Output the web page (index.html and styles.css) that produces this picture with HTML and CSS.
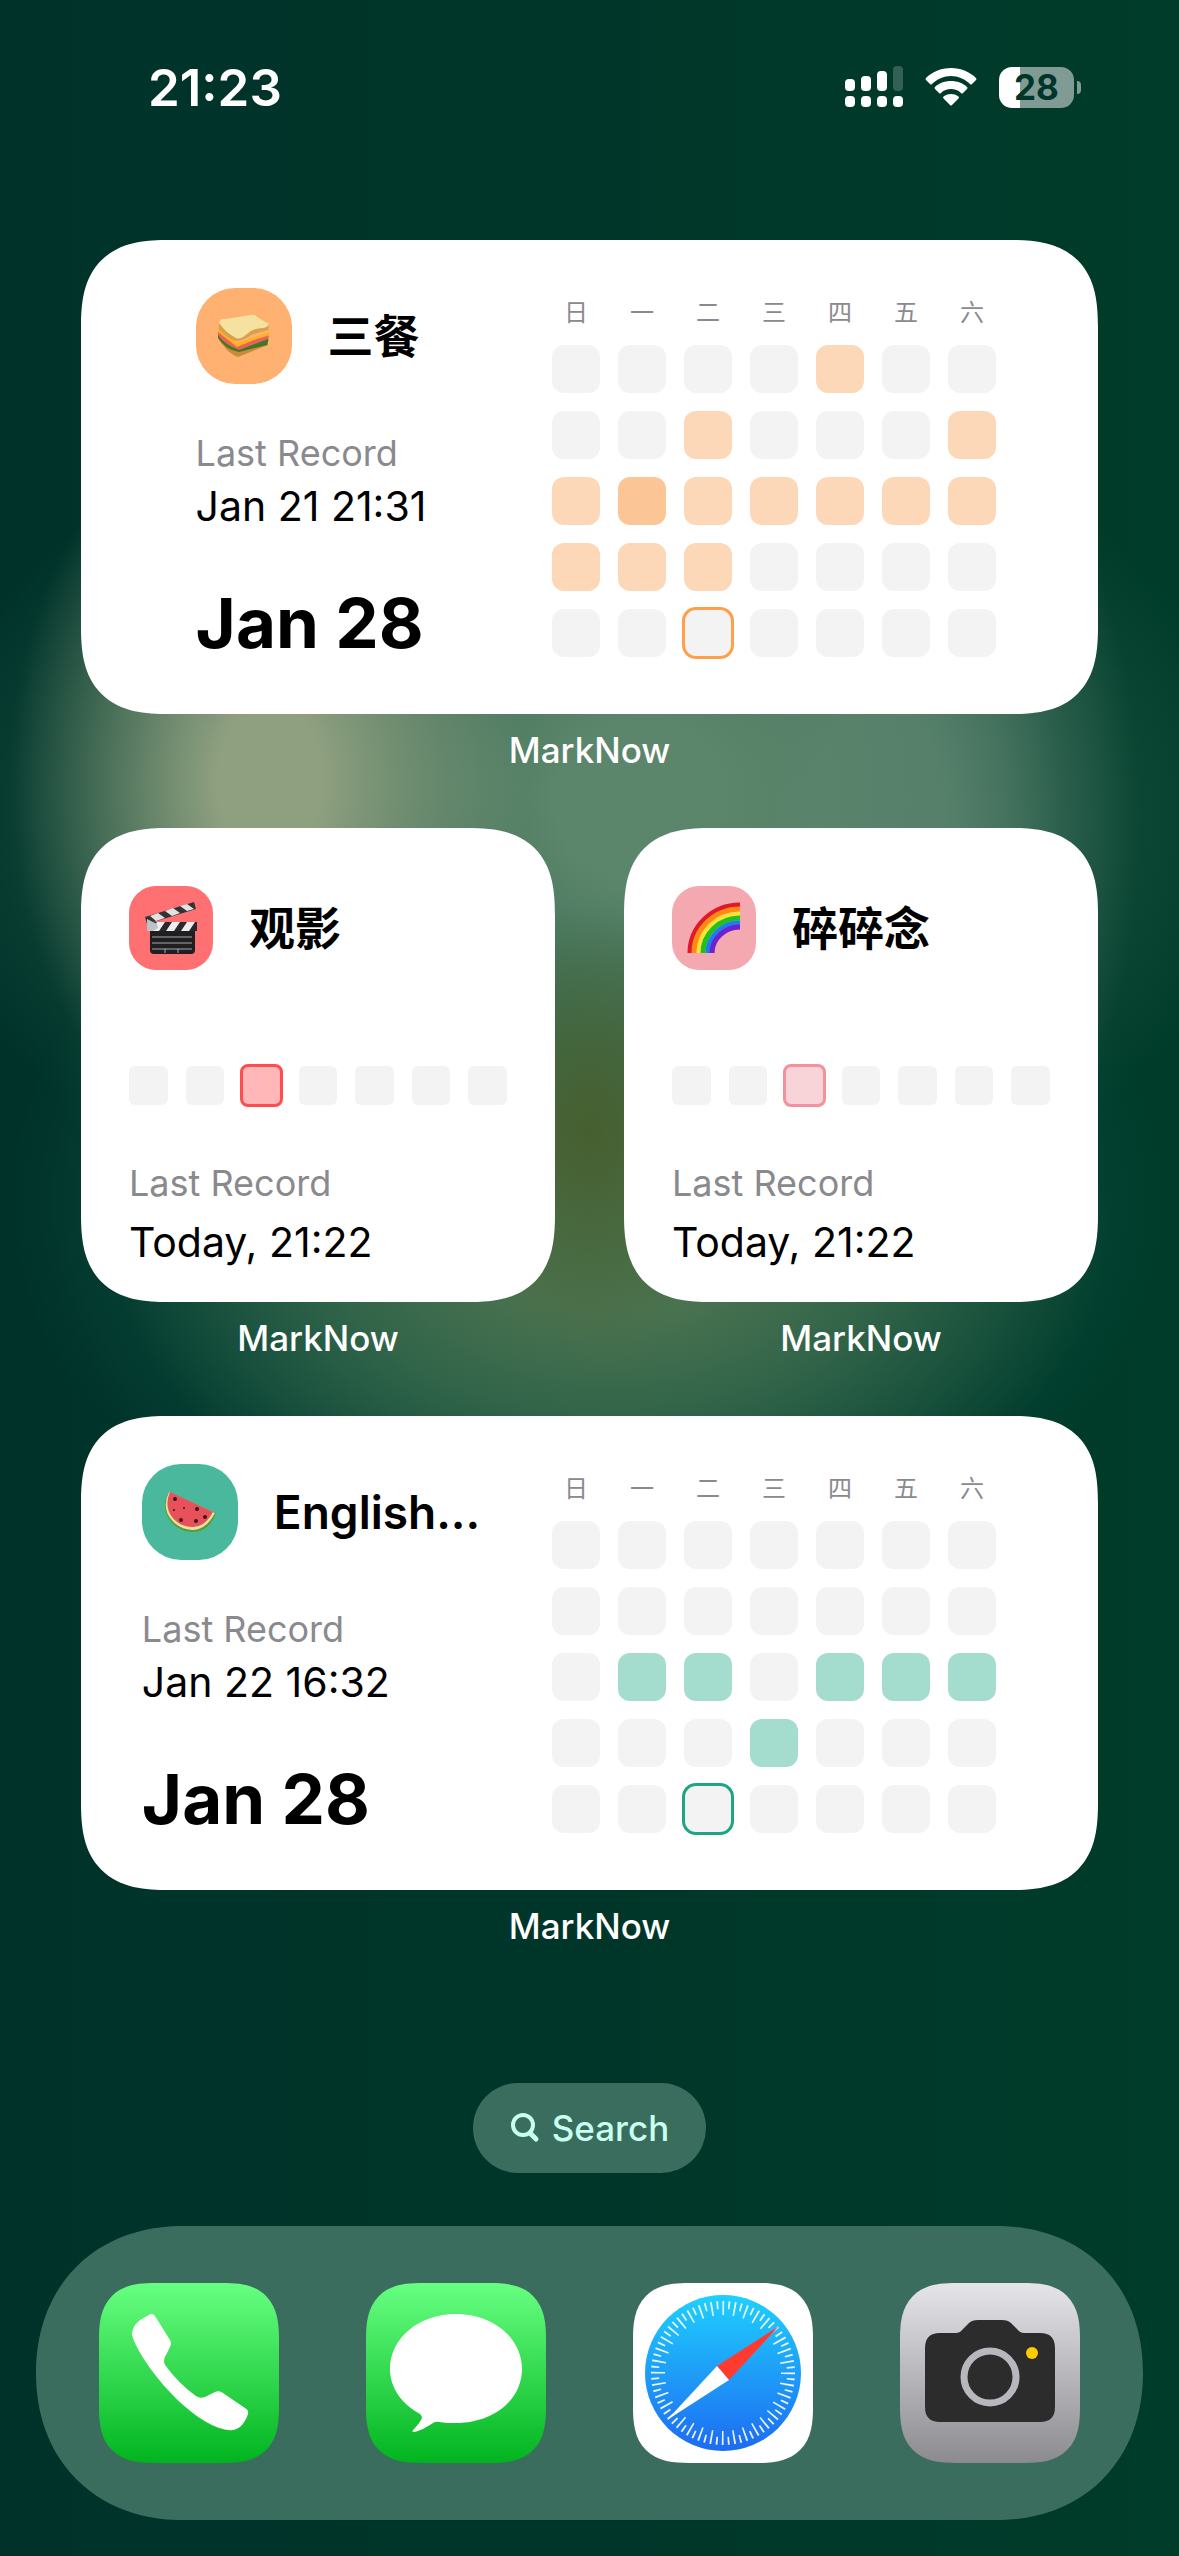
FILE: index.html
```html
<!DOCTYPE html>
<html lang="zh-CN">
<head>
  <meta charset="UTF-8">
  <meta name="viewport" content="width=device-width, initial-scale=1">
  <title>MarkNow</title>
  <link rel="stylesheet" href="styles.css">
</head>
<body>
  <div class="screen">

    <header class="status">
      <time class="clock">21:23</time>
      <div class="status-icons">
        <svg width="58" height="42" viewBox="0 0 58 42" fill="#fff">
          <rect x="0" y="13" width="10" height="12" rx="4"/>
          <rect x="16" y="10" width="10" height="15" rx="4"/>
          <rect x="32" y="5" width="10" height="20" rx="4"/>
          <rect x="48" y="0" width="10" height="25" rx="4" opacity=".2"/>
          <rect x="0" y="30" width="10" height="11" rx="4"/>
          <rect x="16" y="30" width="10" height="11" rx="4"/>
          <rect x="32" y="30" width="10" height="11" rx="4"/>
          <rect x="48" y="30" width="10" height="11" rx="4"/>
        </svg>
        <svg width="52" height="38" viewBox="0 0 52 38" fill="#fff">
          <path d="M26 0C36 0 45 4 51 10Q52 11 51 12L47 16Q46 17 45 16C40 11 33 8 26 8S12 11 7 16Q6 17 5 16L1 12Q0 11 1 10C7 4 16 0 26 0Z"/>
          <path d="M26 13C32 13 38 15 42 19Q43 20 42 21L38 25Q37 26 36 25C33 22 30 21 26 21S19 22 16 25Q15 26 14 25L10 21Q9 20 10 19C14 15 20 13 26 13Z"/>
          <path d="M26 26C29 26 32 27 34 29Q34 30 33 31L27 37Q26 38 25 37L19 31Q18 30 18 29C20 27 23 26 26 26Z"/>
        </svg>
        <div class="battery"><span class="battery-body">28</span><span class="battery-cap"></span></div>
      </div>
    </header>

    <main class="widgets">
      <section class="widget wide">
        <div class="card">
          <div class="info">
            <div class="heading">
              <span class="badge orange">
                <svg width="54" height="44" viewBox="0 0 54 44">
                  <path d="M2 20L20 33L50 25L51 31L21 43Q15 41 9 35L2 26Z" fill="#c98a3c"/>
                  <path d="M1 18Q9 27 19 31L51 22Q52 27 50 31L22 38Q9 36 1 24Z" fill="#3f7a22"/>
                  <path d="M1 16L20 30L52 20L51 25L22 36Q8 31 1 21Z" fill="#e8615a"/>
                  <path d="M1 14L20 29L52 18L53 21L37 26L20 33L1 18Z" fill="#ffb21f"/>
                  <path d="M2 8V15Q10 25 20 27Q28 26 34 21L51 16L52 10Z" fill="#d9a04c"/>
                  <path d="M3 7Q4 4 9 5L34 1Q38 0 40 3L52 10Q51 13 46 14Q36 14 30 20Q23 26 19 24Q9 19 2 9Z" fill="#f6e2a0"/>
                </svg>
              </span>
              <h2>三餐</h2>
            </div>
            <p class="caption">Last Record</p>
            <p class="record">Jan 21 21:31</p>
            <p class="today">Jan 28</p>
          </div>
          <div class="calendar orange-days">
            <span>日</span><span>一</span><span>二</span><span>三</span><span>四</span><span>五</span><span>六</span>
            <i></i><i></i><i></i><i></i><i class="on"></i><i></i><i></i>
            <i></i><i></i><i class="on"></i><i></i><i></i><i></i><i class="on"></i>
            <i class="on"></i><i class="on more"></i><i class="on"></i><i class="on"></i><i class="on"></i><i class="on"></i><i class="on"></i>
            <i class="on"></i><i class="on"></i><i class="on"></i><i></i><i></i><i></i><i></i>
            <i></i><i></i><i class="now"></i><i></i><i></i><i></i><i></i>
          </div>
        </div>
        <p class="app-name">MarkNow</p>
      </section>

      <section class="widget">
        <div class="card small">
          <div class="heading">
            <span class="badge red">
              <svg width="54" height="54" viewBox="0 0 54 54">
                <rect x="6" y="24" width="45" height="29" rx="4" fill="#1f1f22"/>
                <path d="M8 36H48M8 42H48M8 48H48M21 48V52M34 48V52" stroke="#aaa" stroke-width="1"/>
                <path d="M3 21H53V30H5Z" fill="#29292b"/>
                <path d="M13 21H21L15 30H7ZM28 21H36L30 30H22ZM43 21H51L45 30H37Z" fill="#eee"/>
                <path d="M1 16L50 1L52 8L3 23Z" fill="#333"/>
                <path d="M6 15L14 12L21 17L12 20ZM21 10L29 7L36 12L28 15ZM36 5L43 3L50 8L43 10Z" fill="#e2e2e2"/>
                <path d="M3 18L13 23L14 27L9 30H3Z" fill="#bcc3c6"/>
              </svg>
            </span>
            <h2>观影</h2>
          </div>
          <div class="week red-days"><i></i><i></i><i class="on now"></i><i></i><i></i><i></i><i></i></div>
          <p class="caption">Last Record</p>
          <p class="record">Today, 21:22</p>
        </div>
        <p class="app-name">MarkNow</p>
      </section>

      <section class="widget">
        <div class="card small">
          <div class="heading">
            <span class="badge pink">
              <svg width="54" height="54" viewBox="0 0 54 54" fill="none" stroke-width="5">
                <path d="M3 52A50 48 0 0 1 53 4" stroke="#e0182d"/>
                <path d="M7 52A46 44 0 0 1 53 8" stroke="#ff8a12"/>
                <path d="M12 52A41 39 0 0 1 53 13" stroke="#ffe03a"/>
                <path d="M16 52A37 35 0 0 1 53 17" stroke="#1fc21f"/>
                <path d="M21 52A32 30 0 0 1 53 22" stroke="#1f7cf0"/>
                <path d="M25 52A28 26 0 0 1 53 26" stroke="#6d22cf"/>
              </svg>
            </span>
            <h2>碎碎念</h2>
          </div>
          <div class="week pink-days"><i></i><i></i><i class="on now"></i><i></i><i></i><i></i><i></i></div>
          <p class="caption">Last Record</p>
          <p class="record">Today, 21:22</p>
        </div>
        <p class="app-name">MarkNow</p>
      </section>

      <section class="widget wide">
        <div class="card">
          <div class="info">
            <div class="heading">
              <span class="badge green">
                <svg width="54" height="44" viewBox="0 0 54 44">
                  <path d="M6 2Q-2 16 6 29Q14 41 29 42Q46 42 53 23Z" fill="#5d9c2c"/>
                  <path d="M6 2Q-1 16 7 28Q15 39 29 40Q43 40 52 23Z" fill="#e4e3a4"/>
                  <path d="M7 2Q1 16 9 27Q17 37 30 37Q42 37 50 22Z" fill="#e8505a"/>
                  <g fill="#3a1518"><circle cx="12" cy="9" r="2"/><circle cx="11" cy="20" r="1"/><circle cx="21" cy="18" r="1"/><circle cx="34" cy="19" r="2"/><circle cx="18" cy="30" r="2"/><circle cx="33" cy="31" r="2"/><circle cx="42" cy="27" r="2"/></g>
                </svg>
              </span>
              <h2>English...</h2>
            </div>
            <p class="caption">Last Record</p>
            <p class="record">Jan 22 16:32</p>
            <p class="today">Jan 28</p>
          </div>
          <div class="calendar green-days">
            <span>日</span><span>一</span><span>二</span><span>三</span><span>四</span><span>五</span><span>六</span>
            <i></i><i></i><i></i><i></i><i></i><i></i><i></i>
            <i></i><i></i><i></i><i></i><i></i><i></i><i></i>
            <i></i><i class="on"></i><i class="on"></i><i></i><i class="on"></i><i class="on"></i><i class="on"></i>
            <i></i><i></i><i></i><i class="on"></i><i></i><i></i><i></i>
            <i></i><i></i><i class="now"></i><i></i><i></i><i></i><i></i>
          </div>
        </div>
        <p class="app-name">MarkNow</p>
      </section>
    </main>

    <button class="search" type="button">
      <svg width="30" height="30" viewBox="0 0 30 30" fill="none" stroke="currentColor" stroke-linecap="round">
        <circle cx="13" cy="12" r="10" stroke-width="4"/>
        <path d="M20 20L26 26" stroke-width="5"/>
      </svg>
      Search
    </button>

    <nav class="dock">
      <a href="#phone" class="app phone" aria-label="Phone">
        <svg viewBox="0 0 180 180">
          <path fill="#fff" d="M50 32Q53 29 56 33L71 57Q73 60 71 64L66 74Q64 78 66 82Q80 101 97 113Q101 116 106 114L116 109Q120 107 124 110L146 125Q150 127 149 131C147 137 144 141 142 143Q137 148 129 147C112 145 89 129 69 107C48 84 34 60 33 51Q33 46 36 42Q41 36 50 32Z"/>
        </svg>
      </a>
      <a href="#messages" class="app messages" aria-label="Messages">
        <svg viewBox="0 0 180 180">
          <path fill="#fff" d="M90 31C127 31 156 55 156 86S127 140 90 140C84 140 78 140 73 139Q70 138 67 140C61 144 54 148 48 149Q45 149 48 146C51 143 54 139 56 135Q56 133 54 131C36 121 24 105 24 86C24 55 53 31 90 31Z"/>
        </svg>
      </a>
      <a href="#safari" class="app safari" aria-label="Safari">
        <svg viewBox="0 0 180 180">
          <defs><linearGradient id="sky" x2="0" y2="1"><stop stop-color="#1fd0fe"/><stop offset="1" stop-color="#1d6bf1"/></linearGradient></defs>
          <circle cx="90" cy="90" r="78" fill="url(#sky)"/>
          <!-- 36 long and 36 short ticks -->
          <circle class="ticks" cx="90" cy="90" r="65" pathLength="720" stroke-width="14" stroke-dasharray="3 17" stroke-dashoffset="1"/>
          <circle class="ticks" cx="90" cy="90" r="68" pathLength="720" stroke-width="8" stroke-dasharray="3 17" stroke-dashoffset="-9"/>
          <path d="M146 43L84 83L96 97Z" fill="#ff3b30"/>
          <path d="M34 137L84 83L96 97Z" fill="#fff"/>
        </svg>
      </a>
      <a href="#camera" class="app camera" aria-label="Camera">
        <svg viewBox="0 0 180 180">
          <path fill="#2c2c2c" d="M40 50H56Q60 50 63 46L69 40Q72 37 78 37H102Q108 37 111 40L117 46Q120 50 124 50H140Q155 50 155 65V124Q155 139 140 139H40Q25 139 25 124V65Q25 50 40 50Z"/>
          <circle cx="90" cy="94" r="26" fill="none" stroke="#b8b7bd" stroke-width="7"/>
          <circle cx="132" cy="70" r="6" fill="#ffcc00"/>
        </svg>
      </a>
    </nav>
  </div>
</body>
</html>
```

FILE: styles.css
```css
* {
  box-sizing: border-box;
}

body {
  margin: 0;
  font-family: Inter, "Noto Sans CJK SC", sans-serif;
  color: #000;
}

h2, p {
  margin: 0;
}

svg {
  display: block;
}

.screen {
  min-height: 100vh;
  display: flex;
  flex-direction: column;
  padding: 0 36px 36px;
  background:
    radial-gradient(150px 220px at 590px 1130px, #465f2f, transparent),
    radial-gradient(260px 380px at 270px 780px, #8fa080 20%, transparent),
    radial-gradient(500px 330px at 610px 1230px, #4b7350 25%, transparent),
    radial-gradient(420px 400px at 640px 800px, #5c866b 20%, transparent),
    radial-gradient(260px 460px at 880px 820px, #527c69 25%, transparent),
    radial-gradient(580px 420px at 590px 1200px, #0e5040 50%, transparent),
    radial-gradient(680px 440px at 590px 820px, #1d5743 50%, transparent),
    linear-gradient(90deg, #00322a, #003629 50%, #003c2a);
}

/* status bar */
.status {
  display: flex;
  justify-content: space-between;
  align-items: center;
  height: 240px;
  padding: 0 62px 66px 112px;
  color: #fff;
}

.clock {
  font-size: 51px;
  font-weight: 600;
}

.status-icons {
  display: flex;
  align-items: center;
  gap: 22px;
}

.battery {
  display: flex;
  align-items: center;
  gap: 3px;
}

.battery-body {
  width: 75px;
  height: 41px;
  border-radius: 13px;
  background: linear-gradient(90deg, #fff 28%, #809b94 28%);
  color: #003529;
  font-size: 35px;
  font-weight: 700;
  line-height: 41px;
  text-align: center;
}

.battery-cap {
  width: 4px;
  height: 13px;
  border-radius: 0 4px 4px 0;
  background: #809b94;
}

/* widgets */
.widgets {
  display: grid;
  grid-template-columns: 1fr 1fr;
  column-gap: 69px;
  padding: 0 45px;
}

.wide {
  grid-column: 1 / -1;
}

.card {
  display: grid;
  grid-template-columns: 1fr auto;
  column-gap: 59px;
  height: 474px;
  padding: 48px 102px 48px 48px;
  border-radius: 76px;
  background: #fff;
}

.card.small {
  display: block;
  padding: 58px 48px 0;
}

.info {
  justify-self: center;
}

.heading {
  display: flex;
  align-items: center;
  gap: 36px;
}

.heading h2 {
  font-size: 46px;
  font-weight: 600;
  line-height: 60px;
  white-space: nowrap;
}

.badge {
  display: grid;
  place-items: center;
  width: 96px;
  height: 96px;
  border-radius: 39px;
}

.small .badge {
  width: 84px;
  height: 84px;
  border-radius: 27px;
}

.orange { background: #ffb171; }
.red { background: #ff7072; }
.pink { background: #f4a9b0; }
.green { background: #4ab89d; }

.caption {
  margin-top: 45px;
  color: #8a8a8e;
  font-size: 36px;
  line-height: 48px;
}

.record {
  font-size: 41px;
  line-height: 58px;
}

.small .caption {
  margin-top: 54px;
}

.small .record {
  margin-top: 6px;
}

.today {
  margin-top: 46px;
  font-size: 69px;
  font-weight: 700;
  line-height: 84px;
}

.calendar {
  display: grid;
  grid-template-columns: repeat(7, 48px);
  grid-template-rows: 39px repeat(5, 48px);
  gap: 18px;
}

.calendar span {
  align-self: end;
  color: #8a8a8e;
  font-size: 24px;
  line-height: 28px;
  text-align: center;
}

.calendar i,
.week i {
  border-radius: 12px;
  background: #f3f3f3;
}

.week {
  display: grid;
  grid-template-columns: repeat(7, 1fr);
  gap: 18px;
  margin-top: 96px;
}

.week i {
  height: 39px;
  border-radius: 6px;
}

.week .now,
.calendar .now {
  outline: 3px solid;
  outline-offset: -1px;
}

.orange-days .on { background: #fdd8b8; }
.orange-days .more { background: #fcc595; }
.orange-days .now { outline-color: #ff9f4a; }
.green-days .on { background: #a4dccd; }
.green-days .now { outline-color: #1fa583; }
.red-days .on { background: #ffb7b8; }
.red-days .now { outline-color: #ff4c4f; }
.pink-days .on { background: #f8d3d7; }
.pink-days .now { outline-color: #f3919c; }

.app-name {
  height: 114px;
  padding-top: 12px;
  color: #fff;
  font-size: 35px;
  font-weight: 500;
  line-height: 48px;
  text-align: center;
}

/* search and dock */
.search {
  display: flex;
  align-items: center;
  align-self: center;
  gap: 12px;
  height: 90px;
  margin: 79px 0 53px;
  padding: 0 37px;
  border: 0;
  border-radius: 45px;
  background: #3b6d5f;
  color: #c9fff0;
  font: 500 35px Inter, sans-serif;
}

.dock {
  display: flex;
  justify-content: space-between;
  height: 294px;
  padding: 57px 63px;
  border-radius: 132px;
  background: #3b6d5f;
}

.app {
  width: 180px;
  height: 180px;
  border-radius: 42px;
  overflow: hidden;
}

.phone,
.messages {
  background: linear-gradient(#67ff81, #01b41f);
}

.safari {
  background: #fff;
}

.camera {
  background: linear-gradient(#e5e4e9, #8b8a8f);
}

.ticks {
  fill: none;
  stroke: #fff;
  opacity: .9;
}

/* smooth corners where the browser has them */
@supports (corner-shape: squircle) {
  .card {
    border-radius: 88px;
    corner-shape: superellipse(1.4);
  }

  .app {
    border-radius: 56px;
    corner-shape: superellipse(1.4);
  }

  .dock {
    border-radius: 147px;
    corner-shape: superellipse(1.1);
  }
}
```
